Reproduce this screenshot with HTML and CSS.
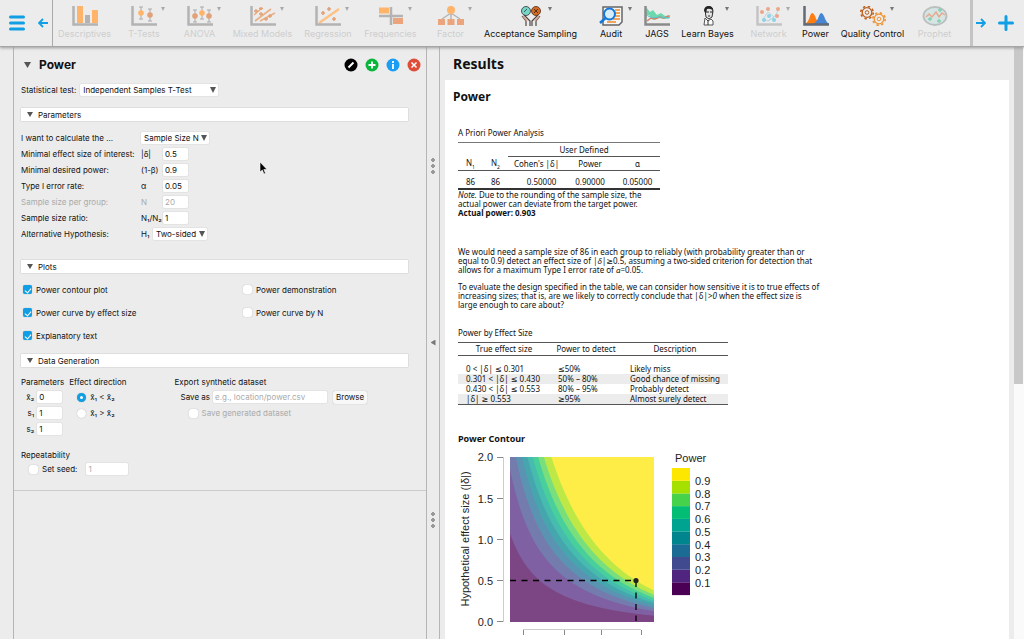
FILE: index.html
```html
<!DOCTYPE html>
<html lang="en">
<head>
<meta charset="utf-8">
<title>Power</title>
<link rel="stylesheet" href="styles.css">
</head>
<body>
<header class="toolbar">
  <div class="bar-start">
    <button class="icon-btn" aria-label="Menu"><svg width="18" height="18" viewBox="0 0 18 18"><path d="M2.500 3h13M2.500 9h13M2.500 15h13" stroke="#109fe4" stroke-width="3" stroke-linecap="round"/></svg></button>
    <button class="icon-btn" aria-label="Scroll left"><svg width="10" height="10" viewBox="0 0 10 10" fill="none" stroke="#109fe4" stroke-width="1.800"><path d="M10 5H1.500M5 1L1 5l4 4"/></svg></button>
  </div>
  <nav class="modules">
    <button class="module off"><svg viewBox="0 0 26 20"><path d="M5 0h6v17H5zM20 4h6v13h-6z" fill="#ffb469"/><path d="M13 9h5v8h-5z" fill="#b3b3b3"/><path d="M1.500 0v18.500H26" fill="none" stroke="#b3b3b3" stroke-width="2.500"/></svg><span>Descriptives</span></button>
    <button class="module off menu"><svg viewBox="0 0 26 20"><path d="M10 1v12M8 1h4M8 13h4M19 3v12M17 3h4M17 15h4" stroke="#aaa"/><circle cx="10" cy="7" r="2.800" fill="#ffb469"/><circle cx="19" cy="9" r="2.800" fill="#e3a177"/><path d="M1.500 0v18.500H26" fill="none" stroke="#b3b3b3" stroke-width="2.500"/></svg><span>T-Tests</span></button>
    <button class="module off menu"><svg viewBox="0 0 26 20"><path d="M8 4v12M6 4h4M6 16h4M15 1v12M13 1h4M13 13h4M22 4v12M20 4h4M20 16h4" stroke="#aaa"/><circle cx="8" cy="10" r="2.800" fill="#e3a177"/><circle cx="15" cy="7" r="2.800" fill="#ffb469"/><circle cx="22" cy="10" r="2.800" fill="#e3a177"/><path d="M1.500 0v18.500H26" fill="none" stroke="#b3b3b3" stroke-width="2.500"/></svg><span>ANOVA</span></button>
    <button class="module off menu"><svg viewBox="0 0 26 20"><path d="M4 9l8-7M5 15L21 3M10 15L25 7" stroke="#e8b086" stroke-width="1.600"/><path d="M6 3v4M4 5h4M11 6v4M9 8h4M16 11v4M14 13h4M20 8v4M18 10h4M11 1v3M9 2.500h4" stroke="#e3a177" stroke-width="1.300"/><path d="M1.500 0v18.500H26" fill="none" stroke="#b3b3b3" stroke-width="2.500"/></svg><span>Mixed Models</span></button>
    <button class="module off menu"><svg viewBox="0 0 26 20"><path d="M4 17L24 3" stroke="#ffc084" stroke-width="2.200"/><path d="M8 5v4M6 7h4M14 1v4M12 3h4M19 11v4M17 13h4" stroke="#e3a177" stroke-width="1.600"/><path d="M1.500 0v18.500H26" fill="none" stroke="#b3b3b3" stroke-width="2.500"/></svg><span>Regression</span></button>
    <button class="module off menu"><svg viewBox="0 0 26 20"><path d="M1 1.500h10v6H1z" fill="#ffb469"/><path d="M15 12h10v6H15z" fill="#eba47b"/><path d="M13 1v18M1 10h24" stroke="#b3b3b3" stroke-width="2.500"/></svg><span>Frequencies</span></button>
    <button class="module off menu"><svg viewBox="0 0 26 20"><path d="M13 5v9M13 7l-9 6M13 7l9 6" stroke="#b5b5b5" stroke-width="1.500"/><circle cx="13" cy="4" r="4" fill="#ffb469"/><path d="M0 13h7v6H0zM9.500 13h7v6h-7zM19 13h7v6h-7z" fill="#eba47b"/></svg><span>Factor</span></button>
    <button class="module menu"><svg viewBox="0 0 26 20"><circle cx="8" cy="5" r="4.500" fill="#79d4c7" stroke="#4a5554"/><circle cx="18" cy="5" r="4.500" fill="#d56c24" stroke="#67452f"/><path d="M6 6l3-3" stroke="#315f59"/><path d="M16 3l4 4m0-4l-4 4" stroke="#513019"/><path d="M4 10l4 5v5M6 9l6 6v5M22 10l-4 5v5M20 9l-6 6v5" fill="none" stroke="#4f4643" stroke-width="1.200"/><path d="M5 10l4 5M21 10l-4 5" stroke="#d5a08d" stroke-width="1.500"/></svg><span>Acceptance Sampling</span></button>
    <button class="module menu"><svg viewBox="0 0 26 20"><path d="M5 1h19v15l-3 3H5z" fill="#f5f5f5" stroke="#666" stroke-width="1.500"/><path d="M17 4h5M18 7h4M17 10h5M15 13h7M9 16h9" stroke="#f08b24" stroke-width="1.300"/><circle cx="11.500" cy="8" r="5.500" fill="#d9eefc" stroke="#1477dc" stroke-width="2"/><path d="M7.500 12L2 17" stroke="#1477dc" stroke-width="2.500"/></svg><span>Audit</span></button>
    <button class="module"><svg viewBox="0 0 26 20"><path d="M2 1l4 5 3-2 4 5 4-2 4 3 5-1v3l-6 1-5-1-6 2-4-5-3 2z" fill="#6cd9ad"/><path d="M3 15l4-3 4 1 5-2 4 1 5-2" fill="none" stroke="#db8061" stroke-width="1.500"/><path d="M4 10l5 2 6-1 10 1" fill="none" stroke="#5ac1cf"/><path d="M1.500 0v18.500H26" fill="none" stroke="#8a8a8a" stroke-width="2.500"/></svg><span>JAGS</span></button>
    <button class="module menu"><svg viewBox="0 0 26 20"><path d="M10 4q1-4 5-3 3 0 3 4l-1 6-3 2-3-2z" fill="#e4e4e4" stroke="#333"/><path d="M9 5q0-5 5-5 4 0 4 5-2-3-6-2l-1 4z" fill="#252525"/><path d="M11 6h3m1 0h3M13 10h2" stroke="#222"/><path d="M9 19l1-7 3 3 3-2 2 2v4z" fill="#fafafa" stroke="#555"/><path d="M13 14v5" stroke="#333"/></svg><span>Learn Bayes</span></button>
    <button class="module off menu"><svg viewBox="0 0 26 20"><path d="M7 13l5-7 6 5-6 4zM12 15l7-5 4-7" fill="none" stroke="#b8d8e1"/><g fill="#eba78b"><circle cx="6" cy="6" r="2"/><circle cx="12" cy="3" r="2"/><circle cx="22" cy="3" r="2"/><circle cx="21" cy="10" r="2"/></g><g fill="#8fd1e8"><circle cx="8" cy="14" r="2"/><circle cx="13" cy="10" r="2"/><circle cx="18" cy="14" r="2"/></g><path d="M1.500 0v18.500H26" fill="none" stroke="#c4c4c4" stroke-width="2.500"/></svg><span>Network</span></button>
    <button class="module"><svg viewBox="0 0 26 20"><path d="M2 18q4-3 5-8 2-6 5 0 2 6 5 8z" fill="#ff7d11"/><path d="M10 18q4-2 6-8 2-6 5 0 2 6 5 8z" fill="#4687d5"/><path d="M1.500 0v18.500H26" fill="none" stroke="#626a75" stroke-width="2.500"/></svg><span>Power</span></button>
    <button class="module menu"><svg viewBox="0 0 26 20" fill="none"><circle cx="7" cy="6.500" r="4.800" stroke="#bd611e" stroke-width="1.300"/><circle cx="7" cy="6.500" r="6.200" stroke="#bd611e" stroke-width="1.600" stroke-dasharray="2.400 2.470"/><circle cx="7" cy="6.500" r="1.800" stroke="#bd611e"/><circle cx="19" cy="13" r="4.800" stroke="#f09332" stroke-width="1.300"/><circle cx="19" cy="13" r="6.200" stroke="#f09332" stroke-width="1.600" stroke-dasharray="2.400 2.470"/><circle cx="19" cy="13" r="1.800" stroke="#f09332"/></svg><span>Quality Control</span></button>
    <button class="module off"><svg viewBox="0 0 26 20"><ellipse cx="13" cy="10" rx="11.500" ry="9" fill="#d5e5e3" stroke="#b9bebe" stroke-width="1.800"/><path d="M4 11l3-3 3 3 4-5 3 5 3-4 3 2" fill="none" stroke="#e7a98f" stroke-width="1.500"/><path d="M16 4h4M18 2v4M6 13h4M8 11v4M15 15h4M17 13v4" stroke="#83ceb0" stroke-width="1.300"/></svg><span>Prophet</span></button>
  </nav>
  <div class="bar-end">
    <button class="icon-btn" aria-label="Scroll right"><svg width="10" height="10" viewBox="0 0 10 10" fill="none" stroke="#109fe4" stroke-width="1.800"><path d="M0 5h8.500M5 1l4 4-4 4"/></svg></button>
    <button class="icon-btn" aria-label="Add module"><svg width="16" height="16" viewBox="0 0 16 16"><path d="M8 1.500v13M1.500 8h13" stroke="#109fe4" stroke-width="3" stroke-linecap="round"/></svg></button>
  </div>
</header>
<main class="workspace">
  <div class="gutter"></div>
  <section class="form-pane">
    <form class="analysis">
      <div class="title-row">
        <span class="tri"></span><h1>Power</h1>
        <div class="actions">
          <button type="button" class="icon-btn" aria-label="Rename"><svg width="14" height="14" viewBox="0 0 14 14"><circle cx="7" cy="7" r="6.500"/><path d="M4.500 9.500l5-5" stroke="#fff" stroke-width="2"/></svg></button>
          <button type="button" class="icon-btn" aria-label="Duplicate"><svg width="14" height="14" viewBox="0 0 14 14"><circle cx="7" cy="7" r="6.500" fill="#0ab53c"/><path d="M7 3.500v7M3.500 7h7" stroke="#fff" stroke-width="1.800"/></svg></button>
          <button type="button" class="icon-btn" aria-label="Information"><svg width="14" height="14" viewBox="0 0 14 14"><circle cx="7" cy="7" r="6.500" fill="#1a9df2"/><path d="M7 3v2M7 6v5" stroke="#fff" stroke-width="1.800"/></svg></button>
          <button type="button" class="icon-btn" aria-label="Remove"><svg width="14" height="14" viewBox="0 0 14 14"><circle cx="7" cy="7" r="6.500" fill="#df4d38"/><path d="M4.500 4.500l5 5m0-5l-5 5" stroke="#fff" stroke-width="1.500"/></svg></button>
        </div>
      </div>
      <div class="test-row">
        <label for="test">Statistical test:</label>
        <span class="select wide"><select id="test"><option>Independent Samples T-Test</option></select></span>
      </div>
      <button type="button" class="section"><span class="tri small"></span>Parameters</button>
      <div class="params">
        <label for="calc">I want to calculate the ...</label><div class="cell"><span class="select"><select id="calc"><option>Sample Size N</option></select></span></div>
        <label for="es">Minimal effect size of interest:</label><div class="cell"><span class="sym">|δ|</span><input id="es" type="text" value="0.5"></div>
        <label for="pw">Minimal desired power:</label><div class="cell"><span class="sym">(1-β)</span><input id="pw" type="text" value="0.9"></div>
        <label for="al">Type I error rate:</label><div class="cell"><span class="sym">α</span><input id="al" type="text" value="0.05"></div>
        <label for="n" class="dim">Sample size per group:</label><div class="cell dim"><span class="sym">N</span><input id="n" type="text" value="20" disabled></div>
        <label for="ra">Sample size ratio:</label><div class="cell"><span class="sym">N₁/N₂</span><input id="ra" type="text" value="1"></div>
        <label for="alt">Alternative Hypothesis:</label><div class="cell"><span class="sym hyp">H₁</span><span class="select"><select id="alt"><option>Two-sided</option></select></span></div>
      </div>
      <button type="button" class="section"><span class="tri small"></span>Plots</button>
      <div class="plots">
        <label class="check"><input type="checkbox" checked>Power contour plot</label>
        <label class="check"><input type="checkbox">Power demonstration</label>
        <label class="check"><input type="checkbox" checked>Power curve by effect size</label>
        <label class="check"><input type="checkbox">Power curve by N</label>
        <label class="check"><input type="checkbox" checked>Explanatory text</label>
      </div>
      <button type="button" class="section"><span class="tri small"></span>Data Generation</button>
      <div class="generation">
        <div class="group">
          <div class="legend">Parameters</div>
          <label class="stat">x̄₂ <input type="text" value="0"></label>
          <label class="stat">s₁ <input type="text" value="1"></label>
          <label class="stat">s₂ <input type="text" value="1"></label>
        </div>
        <div class="group">
          <div class="legend">Effect direction</div>
          <label class="radio"><input type="radio" name="dir" checked>x̄₁ &lt; x̄₂</label>
          <label class="radio"><input type="radio" name="dir">x̄₁ &gt; x̄₂</label>
        </div>
        <div class="group export">
          <div class="legend">Export synthetic dataset</div>
          <div class="save-row"><label for="path">Save as</label><input id="path" type="text" placeholder="e.g., location/power.csv"><button type="button" class="browse">Browse</button></div>
          <label class="check dim save-check"><input type="checkbox" disabled>Save generated dataset</label>
        </div>
      </div>
      <div class="legend">Repeatability</div>
      <div class="seed-row"><label class="check"><input type="checkbox">Set seed:</label><input type="text" value="1" disabled aria-label="Seed"></div>
    </form>
  </section>
  <div class="splitter"><span class="dots"></span><span class="collapse"></span><span class="dots"></span></div>
  <section class="results">
    <h1>Results</h1>
    <div class="sheet">
      <h2>Power</h2>
      <div class="output">
        <table class="apriori">
          <caption>A Priori Power Analysis</caption>
          <colgroup><col class="size"><col class="size"><col class="cohen"><col class="power"><col></colgroup>
          <thead>
            <tr><th></th><th></th><th colspan="3" class="span">User Defined</th></tr>
            <tr><th>N<sub>1</sub></th><th>N<sub>2</sub></th><th>Cohen's |δ|</th><th>Power</th><th>α</th></tr>
          </thead>
          <tbody><tr><td>86</td><td>86</td><td class="num">0.50000</td><td>0.90000</td><td>0.05000</td></tr></tbody>
        </table>
        <p class="note"><em>Note.</em> Due to the rounding of the sample size, the actual power can deviate from the target power.<br><b>Actual power: 0.903</b></p>
        <div class="prose">
          <p>We would need a sample size of 86 in each group to reliably (with probability greater than or<br>equal to 0.9) detect an effect size of <em>|δ|</em>≥0.5, assuming a two-sided criterion for detection that<br>allows for a maximum Type I error rate of <em>α</em>=0.05.</p>
          <p>To evaluate the design specified in the table, we can consider how sensitive it is to true effects of<br>increasing sizes; that is, are we likely to correctly conclude that |δ|&gt;<em>0</em> when the effect size is<br>large enough to care about?</p>
        </div>
        <table class="effects">
          <caption>Power by Effect Size</caption>
          <colgroup><col class="true-size"><col class="detect"><col></colgroup>
          <thead><tr><th>True effect size</th><th>Power to detect</th><th>Description</th></tr></thead>
          <tbody>
            <tr><td>0 &lt; |δ| ≤ 0.301</td><td>≤50%</td><td>Likely miss</td></tr>
            <tr><td>0.301 &lt; |δ| ≤ 0.430</td><td>50% – 80%</td><td>Good chance of missing</td></tr>
            <tr><td>0.430 &lt; |δ| ≤ 0.553</td><td>80% – 95%</td><td>Probably detect</td></tr>
            <tr><td>|δ| ≥ 0.553</td><td>≥95%</td><td>Almost surely detect</td></tr>
          </tbody>
        </table>
        <h3>Power Contour</h3>
        <svg class="contour" width="280" height="190" viewBox="0 0 280 190">
          <g id="bands" opacity="0.72"></g>
          <path d="M45.500 12v165M65 184.500h118" stroke="#ccc"/>
          <path d="M39 12.500h6M39 176.500h6M39 53.500h6M39 94.500h6M39 135.500h6M65.500 185v5M183.500 185v5M106.500 185v5M143.500 185v5" stroke="#888"/>
          <g class="tick-y"><text x="35" y="16">2.0</text><text x="35" y="58">1.5</text><text x="35" y="99">1.0</text><text x="35" y="140">0.5</text><text x="35" y="181">0.0</text></g>
          <text class="axis-title" transform="translate(11 94) rotate(-90)">Hypothetical effect size (|δ|)</text>
          <path d="M52 135.500h126M178 136v40" fill="none" stroke="#000" stroke-width="1.300" stroke-dasharray="6 5.500"/>
          <circle cx="178" cy="135.500" r="2.600"/>
          <text class="key-title" x="217" y="17">Power</text>
          <g id="key"></g>
        </svg>
      </div>
    </div>
  </section>
  <div class="scrollbar"><span class="thumb"></span></div>
  <svg class="pointer" width="9" height="14" viewBox="0 0 9 14"><path d="M1 1v10l2.300-2 1.700 4 1.500-.7-1.700-3.800H8z" stroke="#fff" stroke-width=".6"/></svg>
</main>
<script src="plot.js"></script>
</body>
</html>
```
FILE: plot.js
```js
const NS = "http://www.w3.org/2000/svg";
const colours = ["#4b0055", "#4f2580", "#3f4a8f", "#1b6b95", "#00858e", "#00a38f", "#03bd75", "#46d24b", "#a6e000", "#fde700"];
const scale = [0, 0.2, 0.345, 0.443, 0.527, 0.605, 0.683, 0.767, 0.864, 1];
const plot = { x: 52, y: 12, w: 144, h: 165, unit: 82.2 };

function add(parent, name, attrs, text) {
  const el = document.createElementNS(NS, name);
  for (const key in attrs) el.setAttribute(key, attrs[key]);
  if (text) el.textContent = text;
  parent.appendChild(el);
}

// Effect size reached at horizontal offset u, where the sample size is on a log scale.
function effect(u, k) {
  const n = 86 * Math.exp((u - 126) / 33);
  return 0.5 * k * Math.sqrt(86 / n) * (1 + 0.6 / n + 1 / (n * n));
}

const bands = document.getElementById("bands");
const key = document.getElementById("key");
const bottom = plot.y + plot.h;
colours.forEach((fill, i) => {
  let d = "";
  for (let u = 0; u <= plot.w; u++) {
    const y = Math.max(plot.y, bottom - effect(u, scale[i]) * plot.unit);
    d += (u ? "L" : "M") + (plot.x + u) + " " + y.toFixed(1);
  }
  d += `V${plot.y}H${plot.x}Z`;
  add(bands, "path", { d, fill });
  const top = 23 + (9 - i) * 12.7;
  add(key, "rect", { x: 214, y: top, width: 18, height: 12.8, fill });
  if (i) add(key, "text", { x: 237, y: top + 17 }, "0." + i);
});
```
FILE: styles.css
```css
* { box-sizing: border-box; }
html, body { height: 100%; }
body {
  margin: 0;
  display: flex;
  flex-direction: column;
  overflow: hidden;
  background: #ececec;
  color: #111;
  font: 8px/12px Inter, "DejaVu Sans", sans-serif;
}
button, input, select { font: inherit; color: inherit; }
button { border: 0; padding: 0; background: none; }
.icon-btn { display: flex; }

.toolbar {
  position: relative;
  z-index: 1;
  flex: none;
  display: flex;
  height: 47px;
  border-bottom: 1px solid #a6a6a6;
  box-shadow: 0 1px 3px #999;
  background: #ececec;
}
.bar-start, .bar-end { flex: none; display: flex; align-items: center; }
.bar-start { width: 53px; padding-left: 8px; gap: 12px; border-right: 1px solid #aaa; }
.bar-end { width: 54px; padding-left: 3px; gap: 12px; border-left: 3px solid #c4c4c4; }
.modules {
  flex: 1;
  display: grid;
  grid-template-columns: 63fr 56fr 55fr 71fr 60fr 65fr 55fr 105fr 56fr 36fr 65fr 57fr 37fr 77fr 47fr;
  padding: 6px 12px 0 0;
}
.module {
  position: relative;
  display: flex;
  flex-direction: column;
  align-items: center;
  gap: 2px;
  font-size: 9px;
  white-space: nowrap;
}
.module svg { width: 26px; height: 20px; }
.module.off { color: #cecece; }
.menu::after {
  content: "";
  position: absolute;
  top: 1px;
  left: calc(50% + 17px);
  border: 2px solid transparent;
  border-top: 4px solid #777;
  border-bottom: 0;
}
.menu.off::after { border-top-color: #aaa; }

.workspace { position: relative; flex: 1; min-height: 0; display: flex; }
.gutter { flex: none; width: 14px; border-right: 1px solid #b5b5b5; }
.form-pane { flex: 412; min-width: 0; }
.analysis { padding: 8px 5px 13px 7px; border-bottom: 1px solid #ccc; }
.title-row { display: flex; align-items: center; height: 20px; }
.title-row h1 { margin: 0 0 0 8px; font-size: 12px; line-height: 18px; }
.actions { display: flex; gap: 7px; margin-left: auto; }
.tri { width: 7px; height: 6px; margin-left: 3px; background: #555; clip-path: polygon(0 0, 100% 0, 50% 100%); }
.tri.small { width: 6px; height: 5px; margin: 0; }
.test-row { display: flex; align-items: center; gap: 4px; margin-top: 9px; }
.select { position: relative; display: flex; }
.select::after {
  content: "";
  position: absolute;
  right: 2px;
  top: 3px;
  border: 3px solid transparent;
  border-top: 6px solid #555;
  border-bottom: 0;
}
.select select {
  appearance: none;
  height: 12px;
  padding: 0 10px 0 3px;
  border: 0;
  border-radius: 1px;
  box-shadow: 0 0 1px #999;
  background: #fff;
  line-height: 12px;
}
.wide select { width: 138px; }
.section {
  display: flex;
  align-items: center;
  gap: 5px;
  width: calc(100% - 13px);
  height: 13px;
  margin-top: 12px;
  padding-left: 6px;
  background: #fff;
  box-shadow: 0 0 1px #999;
}
input[type="text"] {
  width: 25px;
  height: 12px;
  padding: 0 2px;
  border: 0;
  border-radius: 1px;
  box-shadow: 0 0 1px #999;
  background: #fff;
}
.dim, input:disabled { color: #aaa; }
.params {
  display: grid;
  grid-template-columns: 116px 1fr;
  column-gap: 4px;
  grid-auto-rows: 16px;
  align-items: center;
  margin-top: 9px;
}
.params + .section { margin-top: 18px; }
.cell { display: flex; align-items: center; }
.sym { width: 22px; white-space: nowrap; }
.sym.hyp { width: 12px; }
.plots {
  display: grid;
  grid-template-columns: 220px 1fr;
  grid-auto-rows: 23px;
  align-items: center;
  margin-top: 5px;
}
.check, .radio { display: flex; align-items: center; }
.check { gap: 4px; }
.check input, .radio input {
  appearance: none;
  flex: none;
  width: 9px;
  height: 9px;
  margin: 0 0 0 2px;
  border-radius: 2px;
  background: #fff;
  box-shadow: 0 0 1px #999;
}
.check input:checked { background: #109fe4; display: grid; place-items: center; }
.check input:checked::after {
  content: "";
  width: 3px;
  height: 5px;
  border: solid #fff;
  border-width: 0 1px 1px 0;
  transform: rotate(40deg);
}
.radio { gap: 4px; height: 16px; }
.radio input { margin-left: 8px; border-radius: 50%; }
.radio input:checked { border: 3px solid #109fe4; }
.plots + .section { margin-top: 7px; }
.generation { display: flex; gap: 5px; margin-top: 9px; }
.group .legend { margin-bottom: 1px; }
.stat { display: flex; align-items: center; justify-content: flex-end; gap: 3px; height: 16px; padding-right: 2px; }
.export { margin-left: 43px; }
.save-row { display: flex; align-items: center; gap: 3px; height: 16px; padding-left: 6px; }
.save-row input[type="text"] { width: 114px; }
::placeholder { color: #aaa; }
.browse { height: 13px; margin-left: 3px; padding: 0 3px; border-radius: 2px; background: #f8f8f8; box-shadow: 0 0 1px #999; }
.save-check { height: 16px; padding-left: 12px; }
.generation + .legend { margin-top: 12px; }
.seed-row { display: flex; align-items: center; gap: 9px; height: 16px; padding-left: 6px; }
.seed-row input[type="text"] { width: 42px; }

.splitter {
  flex: none;
  width: 14px;
  border: solid #b5b5b5;
  border-width: 0 1px;
  display: flex;
  flex-direction: column;
  align-items: center;
  justify-content: space-between;
  padding: 110px 0 111px;
}
.dots {
  width: 4px;
  height: 17px;
  background: radial-gradient(circle, #999 2px, transparent 2px) 0 0 / 4px 6px;
}
.collapse { width: 5px; height: 6px; background: #777; clip-path: polygon(100% 0, 100% 100%, 0 50%); }

.results {
  flex: 574;
  min-width: 0;
  overflow: hidden;
  font: 8px/9px "Noto Sans", "DejaVu Sans", sans-serif;
}
.results h1 { margin: 0; padding: 7px 0 7px 13px; font-size: 14px; line-height: 19px; }
.sheet { height: 100%; margin: 0 5px; padding: 9px 8px 0; background: #fff; }
.sheet h2 { margin: 0; font-size: 12px; line-height: 16px; }
.output { padding: 23px 0 0 5px; }
table { border-collapse: collapse; table-layout: fixed; }
th { font-weight: normal; }
caption { padding-bottom: 4px; text-align: left; line-height: 10px; }
.apriori { width: 202px; border-bottom: 2px solid #333; text-align: center; }
.size { width: 25px; }
.cohen { width: 57px; }
.power { width: 50px; }
.apriori th, .apriori td { height: 14px; padding: 0; }
.apriori thead { border-top: 1px solid #777; border-bottom: 1px solid #555; }
.apriori .span { border-bottom: 1px solid #555; }
.apriori tbody td { height: 18px; padding-top: 5px; }
.apriori .num { padding-left: 10px; }
sub { font-size: 5px; line-height: 1px; }
.note { width: 202px; margin: 0; }
.prose { margin-top: 30px; }
.prose p { margin: 0 0 8px; white-space: nowrap; }
.effects { width: 270px; margin-top: 19px; border-bottom: 1px solid #555; }
.true-size { width: 92px; }
.detect { width: 72px; }
.effects thead { border-top: 1px solid #555; border-bottom: 1px solid #555; }
.effects th { height: 13px; padding: 0; }
.effects td { height: 10px; padding: 0 0 0 8px; line-height: 10px; white-space: nowrap; }
.effects tbody tr:first-child td { height: 18px; padding-top: 8px; }
.effects tbody tr:nth-child(even) { background: #ececec; }
h3 { margin: 28px 0 0; font-size: 9px; line-height: 12px; }
.contour { display: block; font: 11px "Liberation Sans", sans-serif; fill: #222; }
.tick-y text { text-anchor: end; }
.axis-title { text-anchor: middle; }
.scrollbar { flex: none; width: 10px; background: #fafafa; }
.thumb { display: block; width: 9px; height: 57%; background: #c8c8c8; }
.pointer { position: absolute; left: 259px; top: 114px; }
```
